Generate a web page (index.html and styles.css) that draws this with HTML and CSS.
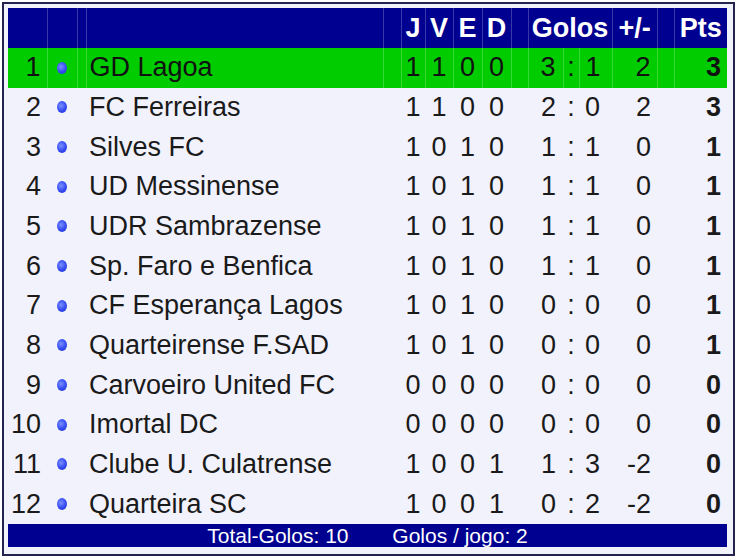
FILE: index.html
```html
<!DOCTYPE html>
<html lang="pt">
<head>
    <meta charset="UTF-8">
    <title>Classificação</title>
    <link rel="stylesheet" href="styles.css">
</head>
<body>
    <div class="frame">
        <table class="standings">
            <colgroup>
                <col class="w-rank"><col class="w-dot"><col class="w-gap1"><col class="w-name"><col class="w-gap2">
                <col class="w-j"><col class="w-v"><col class="w-e"><col class="w-d"><col class="w-gap3">
                <col class="w-hg"><col class="w-colon"><col class="w-ag"><col class="w-diff"><col class="w-gap3"><col class="w-pts">
            </colgroup>
            <thead>
                <tr>
                    <th></th><th></th><th></th><th></th><th></th>
                    <th>J</th><th>V</th><th>E</th><th>D</th><th></th>
                    <th colspan="3">Golos</th><th>+/-</th><th></th><th>Pts</th>
                </tr>
            </thead>
            <tbody>
                <tr class="leader">
                    <td class="rank">1</td><td><span class="dot"></span></td><td></td><td class="name">GD Lagoa</td><td></td>
                    <td class="num">1</td><td class="num">1</td><td class="num">0</td><td class="num">0</td><td></td>
                    <td class="hg">3</td><td class="colon">:</td><td class="ag">1</td><td class="diff">2</td><td></td><td class="pts">3</td>
                </tr>
                <tr>
                    <td class="rank">2</td><td><span class="dot"></span></td><td></td><td class="name">FC Ferreiras</td><td></td>
                    <td class="num">1</td><td class="num">1</td><td class="num">0</td><td class="num">0</td><td></td>
                    <td class="hg">2</td><td class="colon">:</td><td class="ag">0</td><td class="diff">2</td><td></td><td class="pts">3</td>
                </tr>
                <tr>
                    <td class="rank">3</td><td><span class="dot"></span></td><td></td><td class="name">Silves FC</td><td></td>
                    <td class="num">1</td><td class="num">0</td><td class="num">1</td><td class="num">0</td><td></td>
                    <td class="hg">1</td><td class="colon">:</td><td class="ag">1</td><td class="diff">0</td><td></td><td class="pts">1</td>
                </tr>
                <tr>
                    <td class="rank">4</td><td><span class="dot"></span></td><td></td><td class="name">UD Messinense</td><td></td>
                    <td class="num">1</td><td class="num">0</td><td class="num">1</td><td class="num">0</td><td></td>
                    <td class="hg">1</td><td class="colon">:</td><td class="ag">1</td><td class="diff">0</td><td></td><td class="pts">1</td>
                </tr>
                <tr>
                    <td class="rank">5</td><td><span class="dot"></span></td><td></td><td class="name">UDR Sambrazense</td><td></td>
                    <td class="num">1</td><td class="num">0</td><td class="num">1</td><td class="num">0</td><td></td>
                    <td class="hg">1</td><td class="colon">:</td><td class="ag">1</td><td class="diff">0</td><td></td><td class="pts">1</td>
                </tr>
                <tr>
                    <td class="rank">6</td><td><span class="dot"></span></td><td></td><td class="name">Sp. Faro e Benfica</td><td></td>
                    <td class="num">1</td><td class="num">0</td><td class="num">1</td><td class="num">0</td><td></td>
                    <td class="hg">1</td><td class="colon">:</td><td class="ag">1</td><td class="diff">0</td><td></td><td class="pts">1</td>
                </tr>
                <tr>
                    <td class="rank">7</td><td><span class="dot"></span></td><td></td><td class="name">CF Esperança Lagos</td><td></td>
                    <td class="num">1</td><td class="num">0</td><td class="num">1</td><td class="num">0</td><td></td>
                    <td class="hg">0</td><td class="colon">:</td><td class="ag">0</td><td class="diff">0</td><td></td><td class="pts">1</td>
                </tr>
                <tr>
                    <td class="rank">8</td><td><span class="dot"></span></td><td></td><td class="name">Quarteirense F.SAD</td><td></td>
                    <td class="num">1</td><td class="num">0</td><td class="num">1</td><td class="num">0</td><td></td>
                    <td class="hg">0</td><td class="colon">:</td><td class="ag">0</td><td class="diff">0</td><td></td><td class="pts">1</td>
                </tr>
                <tr>
                    <td class="rank">9</td><td><span class="dot"></span></td><td></td><td class="name">Carvoeiro United FC</td><td></td>
                    <td class="num">0</td><td class="num">0</td><td class="num">0</td><td class="num">0</td><td></td>
                    <td class="hg">0</td><td class="colon">:</td><td class="ag">0</td><td class="diff">0</td><td></td><td class="pts">0</td>
                </tr>
                <tr>
                    <td class="rank">10</td><td><span class="dot"></span></td><td></td><td class="name">Imortal DC</td><td></td>
                    <td class="num">0</td><td class="num">0</td><td class="num">0</td><td class="num">0</td><td></td>
                    <td class="hg">0</td><td class="colon">:</td><td class="ag">0</td><td class="diff">0</td><td></td><td class="pts">0</td>
                </tr>
                <tr>
                    <td class="rank">11</td><td><span class="dot"></span></td><td></td><td class="name">Clube U. Culatrense</td><td></td>
                    <td class="num">1</td><td class="num">0</td><td class="num">0</td><td class="num">1</td><td></td>
                    <td class="hg">1</td><td class="colon">:</td><td class="ag">3</td><td class="diff">-2</td><td></td><td class="pts">0</td>
                </tr>
                <tr>
                    <td class="rank">12</td><td><span class="dot"></span></td><td></td><td class="name">Quarteira SC</td><td></td>
                    <td class="num">1</td><td class="num">0</td><td class="num">0</td><td class="num">1</td><td></td>
                    <td class="hg">0</td><td class="colon">:</td><td class="ag">2</td><td class="diff">-2</td><td></td><td class="pts">0</td>
                </tr>
            </tbody>
            <tfoot>
                <tr>
                    <td colspan="16">
                        <span class="total">Total-Golos: 10</span>
                        <span class="total">Golos / jogo: 2</span>
                    </td>
                </tr>
            </tfoot>
        </table>
    </div>
</body>
</html>
```

FILE: styles.css
```css
body {
    margin: 0;
    background-color: #ffffff;
    font-family: 'Liberation Sans', Arial, sans-serif;
}

.frame {
    margin: 2px;
    border: 2px solid #23234d;
    padding: 4px 6px 7px 4px;
    background-color: #f2f2fc;
}

.standings {
    width: 719px;
    table-layout: fixed;
    border-collapse: collapse;
    font-size: 27px;
    color: #1a1a1a;
}

.w-rank { width: 39px; }
.w-dot { width: 30px; }
.w-gap1 { width: 9px; }
.w-name { width: 297px; }
.w-gap2 { width: 18px; }
.w-j { width: 24px; }
.w-v { width: 28px; }
.w-e { width: 29px; }
.w-d { width: 29px; }
.w-gap3 { width: 17px; }
.w-hg { width: 35px; }
.w-colon { width: 16px; }
.w-ag { width: 33px; }
.w-diff { width: 45px; }
.w-pts { width: 53px; }

.standings th,
.standings td {
    padding: 0;
    white-space: nowrap;
}

/* linhas verticais só no cabeçalho e no líder */
.standings thead th,
.leader td {
    border-left: 1px solid rgba(255, 255, 255, 0.22);
}

.standings thead th:first-child,
.leader td:first-child {
    border-left: none;
}

.standings thead th {
    height: 40px;
    background-color: #000090;
    color: #ffffff;
    font-weight: bold;
    text-align: center;
}

.standings tbody td {
    height: 39.67px;
}

.leader td {
    background-color: #00cc00;
    color: #111111;
}

.rank {
    text-align: right;
    padding-right: 6px !important;
}

.dot {
    display: block;
    width: 10px;
    height: 12px;
    margin: 0 auto;
    border-radius: 50%;
    background: radial-gradient(circle at 40% 40%, #7a8fff 0%, #3349f2 55%, #2236cc 100%);
}

.name {
    padding-left: 3px !important;
}

.num,
.colon {
    text-align: center;
}

.hg {
    text-align: right;
    padding-right: 7px !important;
}

.ag {
    padding-left: 6px !important;
}

.diff,
.pts {
    text-align: right;
    padding-right: 6px !important;
}

.pts {
    font-weight: bold;
}

.standings tfoot td {
    height: 23px;
    background-color: #000090;
    color: #ffffff;
    font-size: 21px;
    text-align: center;
    line-height: 23px;
}

.total {
    margin: 0 19px;
}
```
